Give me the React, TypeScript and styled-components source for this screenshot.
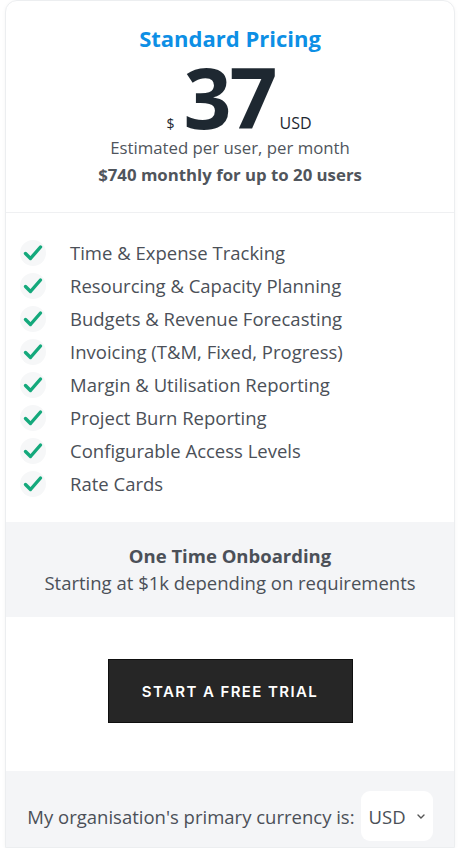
import styled, { createGlobalStyle } from 'styled-components'

const Global = createGlobalStyle`
  html, body {
    margin: 0;
    padding: 0;
    background: #ffffff;
  }
  body {
    font-family: "Open Sans", "Noto Sans", sans-serif;
    color: #4b5058;
  }
`

const Card = styled.div`
  width: 450px;
  margin: 0 0 0 5px;
  border: 1px solid #eceef0;
  border-radius: 12px 12px 0 0;
  box-shadow: 0 1px 4px rgba(0, 0, 0, 0.04);
  background: #fff;
  box-sizing: border-box;
`

const Header = styled.div`
  display: flex;
  flex-direction: column;
  align-items: center;
  padding: 23px 0 24px;
  border-bottom: 1px solid #eff0f2;
`

const Title = styled.h2`
  margin: 0;
  font-size: 22px;
  font-weight: 700;
  color: #0d8fe5;
  line-height: 28px;
`

const PriceRow = styled.div`
  display: flex;
  align-items: baseline;
  color: #1e2831;
  height: 74px;
  margin: 8px 0 0 18px;
`

const Currency = styled.span`
  font-size: 14px;
  margin-right: 9px;
`

const Amount = styled.span`
  font-size: 84px;
  font-weight: 700;
  line-height: 74px;
  letter-spacing: -2px;
  margin-right: 4px;
`

const Unit = styled.span`
  font-size: 16px;
`

const Sub = styled.p<{ $bold?: boolean }>`
  margin: 0;
  font-size: 16.8px;
  font-weight: ${p => (p.$bold ? 700 : 400)};
  line-height: 27px;
  color: #50555c;
`

const Features = styled.ul`
  list-style: none;
  margin: 0;
  padding: 23px 0 22px 14px;
  display: flex;
  flex-direction: column;
`

const Feature = styled.li`
  display: flex;
  align-items: center;
  gap: 24px;
  height: 33px;
  font-size: 18.5px;
  color: #4b5058;
`

const CheckWrap = styled.span`
  width: 26px;
  height: 26px;
  border-radius: 50%;
  background: #f6f7f8;
  display: flex;
  align-items: center;
  justify-content: center;
  flex-shrink: 0;
`

const Onboarding = styled.div`
  background: #f4f5f7;
  display: flex;
  flex-direction: column;
  align-items: center;
  padding: 20px 0 21px;
`

const OnTitle = styled.div`
  font-size: 18.5px;
  font-weight: 700;
  line-height: 28px;
  color: #4b5058;
`

const OnText = styled.div`
  font-size: 18.5px;
  line-height: 26px;
  color: #4b5058;
`

const ButtonArea = styled.div`
  display: flex;
  justify-content: center;
  padding: 42px 0 48px;
`

const TrialButton = styled.button`
  width: 245px;
  height: 64px;
  background: #262626;
  border: 1px solid #0f0f0f;
  color: #fff;
  font-family: "Inter", "Open Sans", sans-serif;
  font-weight: 600;
  font-size: 15px;
  letter-spacing: 1.4px;
  cursor: pointer;
`

const Footer = styled.div`
  background: #f4f5f7;
  display: flex;
  align-items: center;
  justify-content: center;
  gap: 6px;
  padding: 20px 0 6px;
  font-size: 18.5px;
  color: #4b5058;
`

const Select = styled.div`
  display: flex;
  align-items: center;
  gap: 10px;
  background: #fff;
  border-radius: 9px;
  height: 50px;
  padding: 0 7px 0 8px;
  font-size: 18.5px;
`

const Check = () => (
  <svg width="20" height="18" viewBox="0 0 20 18">
    <path d="M2.5 9.5 L7.5 14.5 L17.5 3" fill="none" stroke="#14a97c" strokeWidth="3.4" strokeLinecap="round" strokeLinejoin="round" />
  </svg>
)

const Chevron = () => (
  <svg width="10" height="7" viewBox="0 0 10 7">
    <path d="M2 2 L5 5 L8 2" fill="none" stroke="#555" strokeWidth="1.4" strokeLinecap="round" />
  </svg>
)

const features = [
  'Time & Expense Tracking',
  'Resourcing & Capacity Planning',
  'Budgets & Revenue Forecasting',
  'Invoicing (T&M, Fixed, Progress)',
  'Margin & Utilisation Reporting',
  'Project Burn Reporting',
  'Configurable Access Levels',
  'Rate Cards',
]

const App = () => {
  return (
    <>
      <Global />
      <Card>
        <Header>
          <Title>Standard Pricing</Title>
          <PriceRow>
            <Currency>$</Currency>
            <Amount>37</Amount>
            <Unit>USD</Unit>
          </PriceRow>
          <Sub>Estimated per user, per month</Sub>
          <Sub $bold>$740 monthly for up to 20 users</Sub>
        </Header>
        <Features>
          {features.map(f => (
            <Feature key={f}>
              <CheckWrap>
                <Check />
              </CheckWrap>
              {f}
            </Feature>
          ))}
        </Features>
        <Onboarding>
          <OnTitle>One Time Onboarding</OnTitle>
          <OnText>Starting at $1k depending on requirements</OnText>
        </Onboarding>
        <ButtonArea>
          <TrialButton>START A FREE TRIAL</TrialButton>
        </ButtonArea>
        <Footer>
          My organisation's primary currency is:
          <Select>
            USD
            <Chevron />
          </Select>
        </Footer>
      </Card>
    </>
  )
}

export default App
